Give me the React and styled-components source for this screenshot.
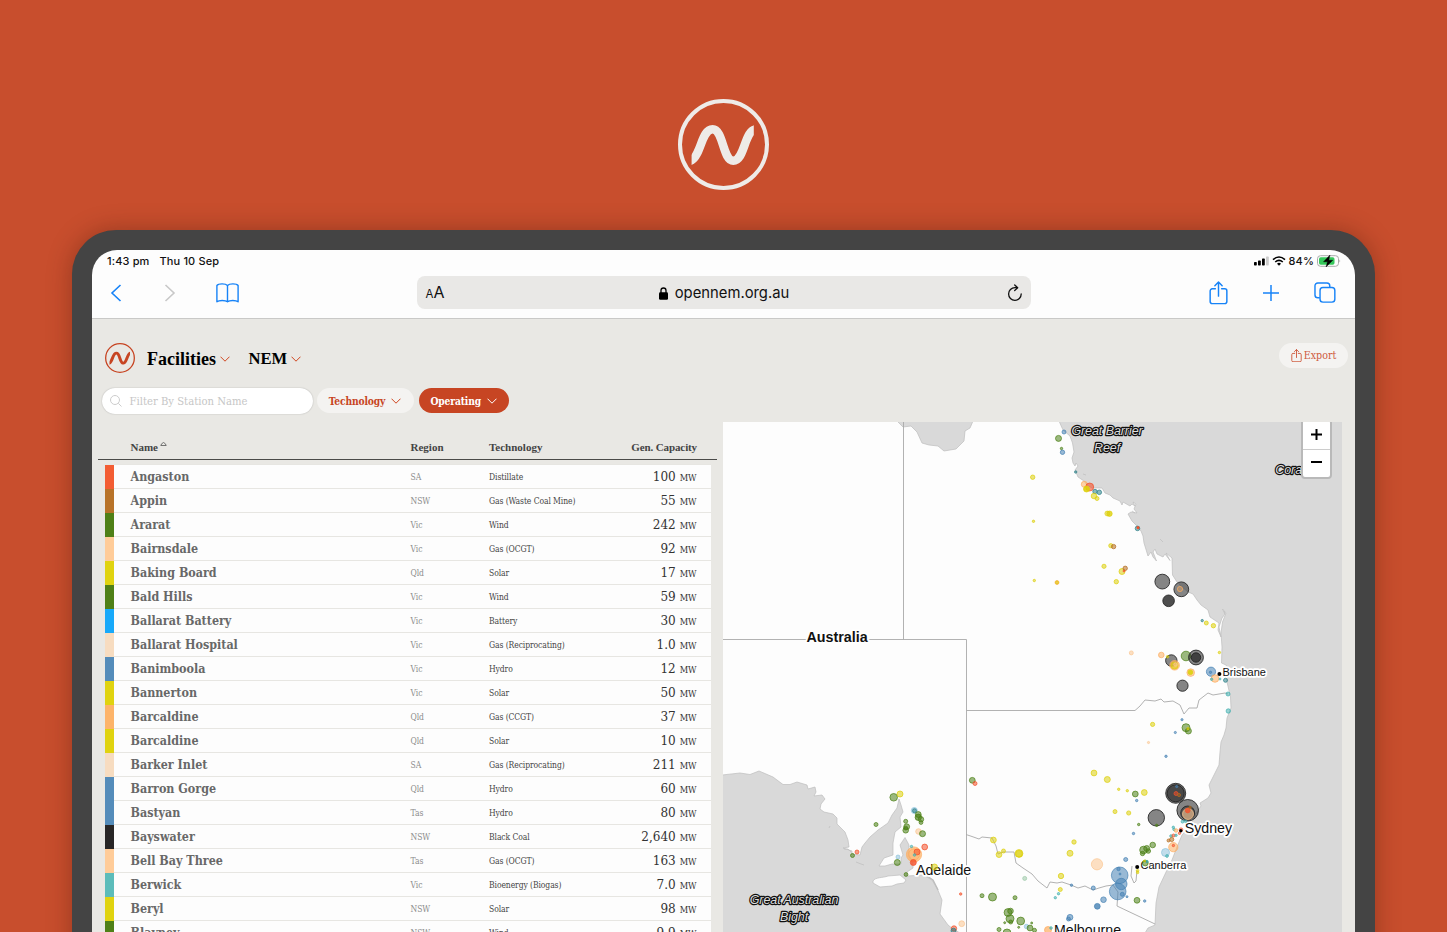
import React from "react";
import styled, { createGlobalStyle } from "styled-components";

const Global = createGlobalStyle`
  * { box-sizing: border-box; }
  body { margin: 0; background: #c84e2d; overflow: hidden; }
  svg { display: block; flex: none; }
`;

const slab = `"DejaVu Serif Condensed", "DejaVu Serif", serif`;
const display = `"Liberation Serif", serif`;
const system = `Inter, "Liberation Sans", sans-serif`;

const Page = styled.div`
  width: 1447px;
  height: 932px;
  overflow: hidden;
  background: #c84e2d;
  display: flex;
  flex-direction: column;
  align-items: center;
  padding-top: 99px;
`;

const Device = styled.div`
  width: 1303px;
  height: 760px;
  flex: none;
  margin-top: 40px;
  padding: 20px 20px 0;
  border-radius: 44px 44px 0 0;
  background: #444;
  box-shadow: 0 0 24px rgba(60, 20, 10, 0.35);
`;

const Screen = styled.div`
  height: 740px;
  border-radius: 25px 25px 0 0;
  overflow: hidden;
  background: #fdfdfd;
  display: flex;
  flex-direction: column;
`;

const StatusBar = styled.div`
  height: 22px;
  display: flex;
  justify-content: space-between;
  align-items: center;
  padding: 0 14px 0 15px;
  font: 500 11px/22px ${system};
  color: #111;
  letter-spacing: 0.14px;
`;

const StatusGroup = styled.div`
  display: flex;
  align-items: center;
  gap: ${(p) => p.$gap}px;
`;

const Toolbar = styled.div`
  height: 47px;
  display: grid;
  grid-template-columns: 1fr 614px 1fr;
  border-bottom: 1px solid #c9c9c7;
`;

const ToolGroup = styled.div`
  height: 41px;
  display: flex;
  align-items: center;
  justify-content: ${(p) => (p.$end ? "flex-end" : "flex-start")};
  gap: ${(p) => p.$gap}px;
  padding: ${(p) => (p.$end ? "0 19.5px 0 0" : "0 0 0 17px")};
`;

const AddressBar = styled.div`
  height: 33px;
  margin-top: 4px;
  padding: 0 8px 2px 9px;
  border-radius: 8px;
  background: #e9e8e6;
  display: grid;
  grid-template-columns: 60px 1fr 60px;
  align-items: center;
  color: #111;
`;

const TextSize = styled.span`
  font: 400 16px/31px ${system};
  padding-top: 1px;
  small { font-size: 11.5px; }
`;

const Address = styled.span`
  display: flex;
  align-items: center;
  justify-content: center;
  gap: 7px;
  font: 400 14.8px/31px ${system};
`;

const Reload = styled.span`
  display: flex;
  justify-content: flex-end;
`;

const SitePage = styled.div`
  flex: 1;
  background: #e9e8e4;
  display: flex;
  flex-direction: column;
`;

const Header = styled.header`
  height: 69px;
  display: flex;
  align-items: flex-start;
  padding: 24px 7px 0 12.5px;
`;

const MenuTitle = styled.div`
  display: flex;
  align-items: center;
  gap: 4px;
  margin-left: ${(p) => p.$left}px;
  height: 32px;
  font: bold ${(p) => p.$size}px/32px ${display};
  color: #000;
`;

const ExportButton = styled.div`
  margin-left: auto;
  width: 69px;
  height: 25px;
  border-radius: 13px;
  background: #f4f3f1;
  color: #cf5a3d;
  display: flex;
  align-items: center;
  justify-content: center;
  gap: 2px;
  font: 400 10.6px/25px ${slab};
`;

const Filters = styled.div`
  height: 34px;
  display: flex;
  align-items: flex-start;
  padding-left: 10px;
`;

const SearchField = styled.div`
  width: 211px;
  height: 26px;
  border-radius: 13px;
  background: #fff;
  box-shadow: 0 0 1.5px rgba(0, 0, 0, 0.28);
  display: flex;
  align-items: center;
  gap: 7.5px;
  padding-left: 8px;
  font: 400 11.2px/27px ${slab};
  color: #c6c6c6;
`;

const Pill = styled.div`
  width: ${(p) => p.$width}px;
  height: 25px;
  margin-left: ${(p) => p.$left}px;
  border-radius: 13px;
  background: ${(p) => (p.$active ? "#c74523" : "#f4f3f1")};
  color: ${(p) => (p.$active ? "#fff" : "#c74523")};
  display: flex;
  align-items: center;
  justify-content: center;
  gap: 6px;
  font: bold 10.2px/26px ${slab};
  letter-spacing: -0.15px;
`;

const Content = styled.main`
  display: flex;
  gap: 6px;
  padding-left: 6px;
`;

const Table = styled.section`
  width: 619px;
`;

const TableHead = styled.div`
  height: 38px;
  border-bottom: 1px solid #4a4a48;
  display: grid;
  grid-template-columns: 280px 78.5px 1fr 100px;
  padding: 14px 20px 0 32.5px;
  font: bold 11px/22px ${display};
  color: #444;
`;

const HeadCell = styled.span`
  display: flex;
  gap: 2px;
  justify-content: ${(p) => (p.$right ? "flex-end" : "flex-start")};
  letter-spacing: ${(p) => (p.$right ? "-0.12px" : "0")};
`;

const Rows = styled.div`
  width: 606px;
  margin: 4px 0 0 6.5px;
`;

const Row = styled.div`
  height: 24px;
  background: #fdfdfd;
  border-top: 1px solid #e7e6e2;
  display: grid;
  grid-template-columns: 9.5px 16.5px 280px 78.5px 1fr 100px 14px;
  align-items: stretch;
`;

const Swatch = styled.span`
  background: ${(p) => p.$color};
`;

const Name = styled.span`
  grid-column: 3;
  font: bold 12.4px/24.4px ${slab};
  color: #686868;
`;

const Region = styled.span`
  font: 400 8.5px/24px ${slab};
  letter-spacing: -0.05px;
  color: #8c8c8c;
`;

const Tech = styled.span`
  font: 400 8.5px/24px ${slab};
  letter-spacing: -0.09px;
  color: #444;
  white-space: nowrap;
`;

const Capacity = styled.span`
  font: 400 13.4px/24.4px ${slab};
  color: #333;
  text-align: right;
  small { margin-left: 4px; font-size: 9.2px; letter-spacing: -0.1px; }
`;

const MapPanel = styled.section`
  position: relative;
  width: 619px;
  height: 510px;
  overflow: hidden;
`;

const ZoomControl = styled.div`
  position: absolute;
  top: -3px;
  right: 10px;
  width: 31px;
  height: 60px;
  background: #fff;
  border: 2px solid #b9b9b9;
  border-radius: 4px;
  display: flex;
  flex-direction: column;
`;

const ZoomButton = styled.div`
  flex: 1;
  display: flex;
  align-items: center;
  justify-content: center;
  & + & { border-top: 1px solid #ccc; }
`;

const Mark = ({ size, color, ring, wave }) => (
  <svg width={size} height={size} viewBox="0 0 91 91" fill="none" stroke={color}>
    <circle cx="45.5" cy="45.5" r={45.5 - ring / 2} strokeWidth={ring} />
    <path
      d="M9 63.3L13.5 61.3C23 56 23.5 30.300 34.6 30.300C45.5 30.300 44.7 61.700 55.300 61.700C66 61.700 66 36 75.500 31L80 29"
      strokeWidth={wave}
      clipPath="url(#markClip)"
    />
    <clipPath id="markClip"><rect x="13.600" y="26" width="62.200" height="40" /></clipPath>
  </svg>
);

const Chevron = ({ w = 10, h = 6, color = "#d0461f", sw = 1 }) => (
  <svg width={w} height={h} viewBox="0 0 10 6" fill="none" stroke={color} strokeWidth={sw}>
    <path d="M.5.7 5 5.200 9.500.7" />
  </svg>
);

const ShareGlyph = ({ w, h, color, sw }) => (
  <svg width={w} height={h} viewBox="0 0 18 23" fill="none" stroke={color} strokeWidth={sw} strokeLinecap="round" strokeLinejoin="round">
    <path d="M6 7.500H3a2 2 0 0 0-2 2v10.200a2 2 0 0 0 2 2h12a2 2 0 0 0 2-2V9.500a2 2 0 0 0-2-2h-3M9 14.500V1M5.500 4.500 9 1l3.500 3.500" />
  </svg>
);

const blue = "#1783f7";

const C = {
  distillate: "#f35d33", wcm: "#b87329", wind: "#4f8017", ocgt: "#ffcc99",
  solar: "#e0d310", battery: "#18a9fa", recip: "#f7dcc0", hydro: "#548cba",
  ccgt: "#fdb46a", black: "#282626", bio: "#5cbcba",
};

const stations = [
  ["Angaston", "SA", "Distillate", "100", C.distillate],
  ["Appin", "NSW", "Gas (Waste Coal Mine)", "55", C.wcm],
  ["Ararat", "Vic", "Wind", "242", C.wind],
  ["Bairnsdale", "Vic", "Gas (OCGT)", "92", C.ocgt],
  ["Baking Board", "Qld", "Solar", "17", C.solar],
  ["Bald Hills", "Vic", "Wind", "59", C.wind],
  ["Ballarat Battery", "Vic", "Battery", "30", C.battery],
  ["Ballarat Hospital", "Vic", "Gas (Reciprocating)", "1.0", C.recip],
  ["Banimboola", "Vic", "Hydro", "12", C.hydro],
  ["Bannerton", "Vic", "Solar", "50", C.solar],
  ["Barcaldine", "Qld", "Gas (CCGT)", "37", C.ccgt],
  ["Barcaldine", "Qld", "Solar", "10", C.solar],
  ["Barker Inlet", "SA", "Gas (Reciprocating)", "211", C.recip],
  ["Barron Gorge", "Qld", "Hydro", "60", C.hydro],
  ["Bastyan", "Tas", "Hydro", "80", C.hydro],
  ["Bayswater", "NSW", "Black Coal", "2,640", C.black],
  ["Bell Bay Three", "Tas", "Gas (OCGT)", "163", C.ocgt],
  ["Berwick", "Vic", "Bioenergy (Biogas)", "7.0", C.bio],
  ["Beryl", "NSW", "Solar", "98", C.solar],
  ["Blayney", "NSW", "Wind", "9.9", C.wind],
];

const K = { k: "#222", y: "#ddd00c", g: "#4b8016", b: "#4682b4", r: "#f4502a", o: "#fdae61", p: "#fbc692", t: "#45b0b0", d: "#2b8088", n: "#b46c20", l: "#8fc3dd", c: "#9cc9a8" };

// Facilities on the map: x, y, radius, colour key, optional fill opacity
const dots = [
  [1064, 432, 2, "b"], [1058.500, 438.400, 3, "g"], [1061.500, 448.500, 1.200, "g"], [1062.500, 452.300, 2.200, "b"],
  [1075.700, 472, 1.200, "d"], [1032.700, 477.200, 2.200, "y"], [1084.300, 484.300, 3, "o"], [1089.700, 487, 4, "r", 0.6], [1086.500, 489, 3, "y", 0.9],
  [1095, 491.500, 2.200, "d"], [1099.300, 492.300, 2.300, "d"], [1094, 496, 2.800, "y"], [1097, 498.500, 2, "y"],
  [1107.300, 513.500, 2.400, "y"], [1109.500, 513.700, 2.700, "y", 0.8], [1033.500, 521.300, 1.200, "y"], [1137.500, 528.400, 2.300, "d"], [1138, 527.700, 1.200, "r", 1],
  [1110.800, 545.700, 2.100, "y"], [1113.600, 546.600, 2.200, "n"], [1104, 566.300, 2.100, "y"], [1122, 571.500, 3, "y"], [1125.200, 568.300, 2.200, "n"], [1124, 571, 1, "r"],
  [1116.300, 581.700, 2.200, "y"], [1034.300, 580.500, 1.200, "y"], [1057, 582.500, 2, "o", 0.8], [1057, 582.500, 1.500, "y", 0.4],
  [1162.300, 581.600, 7.400, "k"], [1181.300, 589.300, 7.400, "k"], [1180, 589, 2.600, "o", 0.3], [1168.600, 600.800, 5.800, "k", 0.8],
  [1202.200, 620.600, 1.200, "d"], [1206.300, 623, 2, "y"], [1213.400, 625.700, 2.200, "y"], [1219.400, 652.500, 1.200, "y"],
  [1131.300, 652.900, 2, "p"], [1161.300, 655, 2.800, "o"], [1171.300, 660.500, 5.700, "k"], [1174.600, 665.300, 4.800, "o", 0.7], [1174.500, 665.500, 3.500, "y"], [1175.500, 664.500, 1.800, "p"], [1167.500, 656.700, 1.200, "y"],
  [1186, 656, 4.800, "g"], [1196, 657.500, 7.400, "k"], [1196, 657.500, 4.700, "k", 0.7], [1190.700, 672.600, 3.800, "o"], [1190.400, 672.300, 2.400, "y", 0.9],
  [1182.500, 685.700, 5.600, "k"], [1211, 671.700, 4.600, "b"], [1210.500, 672.300, 1.200, "b"], [1215, 678.500, 3.800, "o"], [1211.600, 679.300, 1.200, "t"], [1220, 679, 1, "t"],
  [1225.500, 680.300, 2, "d"], [1228, 694, 2, "t"], [1228.300, 711, 2.200, "t"],
  [1152.600, 724.400, 2.100, "y"], [1182, 719.700, 1.100, "b"], [1186, 727.700, 4, "g"], [1188.400, 731, 3, "g"], [1188, 728.700, 1.200, "y"], [1175.300, 732.500, 1.100, "b"], [1148.500, 742.500, 1.100, "p"], [1166, 756.300, 1.200, "b"],
  [1094, 773, 2.900, "y"], [1107.300, 779.500, 3, "y"], [1118.700, 789.300, 1.200, "y"], [1127.300, 790.700, 1.200, "y"], [1135.300, 794, 2.900, "g"], [1144.300, 792.500, 2.900, "y"], [1136.700, 800.500, 1.200, "b"],
  [1115, 811.600, 2, "y"], [1128.700, 813, 2.100, "y"], [1138.700, 824.500, 1.200, "g"], [1133.500, 833.500, 1.200, "b"],
  [1175.700, 793.300, 10, "k", 0.65], [1175.700, 793.300, 8.500, "k", 0.5], [1176, 793.500, 2, "r"], [1179, 795, 1.600, "n"], [1176.700, 786.600, 1.100, "b"],
  [1187.700, 810.300, 10.800, "k"], [1187.700, 813, 7, "k", 0.5], [1188, 814, 5.500, "p", 0.6], [1187.700, 810.500, 2.400, "r", 0.8], [1190, 807.500, 1.300, "n"],
  [1156.300, 817.800, 8.200, "k"], [1156.700, 825.300, 1.200, "g"],
  [1182.500, 821.700, 1.400, "t"], [1185.500, 821.300, 1.300, "t"], [1173.300, 827.300, 1.200, "t"], [1174, 829.500, 1.200, "t"], [1176, 830.500, 1.800, "o"], [1181, 829.700, 1.800, "r"], [1179.500, 833.300, 1.200, "r"],
  [1171, 836, 1.300, "t"], [1173.500, 835.500, 1.500, "r"], [1176, 835.300, 1.200, "t"], [1171.700, 839.500, 2.100, "n"], [1168.500, 840.500, 1.500, "n"], [1173.300, 847.200, 4.600, "o"], [1173.400, 845.500, 1.200, "r"], [1165.500, 852.500, 4, "l"], [1167, 856, 1.400, "t"],
  [1152.700, 845, 2.800, "g"], [1146.700, 848.500, 3, "g"], [1143.500, 850, 3.800, "g"], [1148.300, 851, 2.300, "g"], [1142.500, 853.500, 2.200, "g"],
  [1074, 842, 2.200, "y"], [1070, 853.300, 3, "y"], [1019, 853.700, 3.300, "y"], [1125.700, 859.500, 2, "b"], [1097, 864.300, 5.600, "p"], [1061, 876, 2.700, "y"], [1060.300, 889.500, 2, "y"], [1058.500, 893.700, 1.200, "t"], [1055.300, 897.700, 1.200, "t"],
  [1071.500, 885.200, 1.200, "b"], [1093.300, 888, 2, "b"], [1119.700, 875.300, 8.300, "b"], [1121.300, 884, 5.700, "b"], [1117.700, 891.500, 8.300, "b"], [1118.500, 869, 1.700, "b"], [1120, 874, 1, "b"], [1122.300, 894.300, 2, "b"], [1127, 896.700, 1, "b"],
  [1103.500, 899.700, 2.800, "b"], [1097.300, 906.300, 2.900, "b", 0.8], [1137, 900.300, 2.900, "g"], [1144.700, 901, 1.200, "b"], [1070, 917.300, 2.900, "b"], [1068.500, 919, 2, "b"],
  [1137.600, 870.700, 1.300, "y"], [1137.600, 872.500, 1.200, "y"], [1145.300, 863, 2.900, "g"], [1147, 861.500, 1.200, "t"], [1144.500, 861, 1, "y"],
  [1024.700, 878.400, 2, "c"],
  [972.300, 780.300, 2.900, "g"], [975, 783.500, 2, "r"], [893.700, 797.300, 3.800, "g"], [900, 794, 3, "y"], [876, 824.500, 2, "g"], [857, 852, 2, "r"], [852.500, 855.500, 2, "g"],
  [914.300, 810.500, 3, "l"], [914.500, 810.700, 2, "d"], [918.300, 814.500, 2.900, "g"], [918.300, 817.300, 3.200, "g", 0.7], [921, 819.300, 2.700, "g"], [921, 822.500, 1.900, "g"],
  [905.700, 821.300, 2, "g"], [906.700, 826.700, 2.900, "g"], [905.700, 830.300, 2.800, "g"], [905.700, 828, 2, "g"], [918.500, 831.500, 2.800, "p"], [922.500, 833.700, 3, "g"], [924.700, 847, 2.900, "r"],
  [914, 854.500, 7.600, "o", 0.7], [914, 854.500, 5.500, "o", 0.3], [917, 852, 3, "r"], [914.500, 855, 1.300, "t"], [913.300, 862.500, 3, "r", 0.8], [911.500, 846.500, 1.200, "t"], [898, 857, 2, "l"], [897.300, 862.500, 3, "g"], [906, 874.500, 1.900, "g"],
  [934.500, 867, 3, "y"], [960.700, 894, 1.200, "r"], [961.700, 923.700, 2.900, "p"], [954, 928.500, 2.700, "r"], [953.500, 930.700, 2.500, "d"],
  [993.400, 840, 2.900, "y"], [999, 854.600, 2.900, "y"], [1003.500, 851, 2, "y"], [1019, 853.500, 3.900, "y"],
  [982, 895.700, 2, "g"], [992.500, 897, 4, "g"], [1015, 897.700, 2, "g"], [1008, 912.500, 3.900, "g"], [1010.500, 911, 2.800, "g"], [1010, 918.700, 4, "g"], [1010.700, 922, 2, "g"], [1004.700, 922.700, 1, "g"], [1020.700, 921, 3.900, "g"], [1031.700, 923, 1, "g"], [1018.700, 927.300, 1, "g"],
  [1007, 933, 4, "g"], [999, 929.500, 2, "g"], [1026.500, 926.500, 2.200, "l"], [1030, 928, 2.900, "g"], [1034.500, 930.300, 2, "g"],
  [1048, 930, 3.500, "o", 0.7], [1051, 928, 1.300, "t"],
];

const Dot = ([x, y, r, k, f = 0.55], i) => (
  <circle key={i} cx={x} cy={y} r={r} fill={K[k]} fillOpacity={f} stroke={K[k]} strokeOpacity={k === "k" ? 0.85 : 0.7} strokeWidth="1" />
);

const Ocean = styled.text`
  font: italic 12.5px "Liberation Sans", sans-serif;
  letter-spacing: -0.08px;
  fill: #dedede;
  stroke: #111;
  stroke-width: 2.4px;
  stroke-linejoin: round;
  paint-order: stroke;
  text-anchor: middle;
`;

const City = styled.text`
  font: ${(p) => p.$weight || 400} ${(p) => p.$size}px "Liberation Sans", sans-serif;
  fill: #111;
  stroke: #fff;
  stroke-width: 3.5px;
  stroke-linejoin: round;
  paint-order: stroke;
`;

const FacilityMap = () => (
  <svg width="619" height="510" viewBox="723 422 619 510">
    <rect x="723" y="422" width="620" height="510" fill="#fdfdfd" />
    <g fill="#d9d9d9" stroke="#bdbdbd" strokeWidth=".7" strokeLinejoin="round">
      <path d="M1059 421L1063 430 1070 436 1072.500 443 1074 452 1072 458 1073 463 1075 466 1076 463 1078 466 1075 470 1078 477 1084 481 1087 485 1092 488 1102 488 1105 493 1110 495 1113 498 1120 501 1122 505 1123 502 1130 506 1132 504 1135 506 1133 502 1136 504 1134 509 1137 513 1131 512 1128 514 1132 521 1137 526 1141 531 1143 536 1144 543 1148 556 1151 552 1153 557 1156.500 561 1153 552 1155 549 1157 554 1163 557 1165 554 1170 560.500 1166 553 1172 558 1172.500 575 1177 582 1181 586 1188 592 1193 594 1197 600 1201 605 1208 610 1210 617 1216 621 1219 623 1218 630 1221 637 1219 627 1222 618 1225 614 1222.500 609 1226 613 1222.500 622 1221 633 1222 647 1221.500 663 1226 665 1228 668 1227 682 1230.500 697 1231 708 1227 718 1226 728 1224 735 1221 742 1220 752 1219 765 1215 773 1209 785 1211 793 1208 798 1200 803 1201 806 1196 813 1191 825 1182 835 1177 847 1172 860 1167 870 1159 887 1156 903 1155 925 1148 928 1145 933H1343V421Z" />
      <path d="M897 421L903 427 911 426 917 432 922 443 929 445 938 446 944 451 956 449 964 441 965 431 970 428 973 421Z" />
      <path d="M722 775L740 773 750 774.500 759 771 773 777 783 784.500 790 784.500 797 782 807 785 808 789 815 787 816 792 814 796 822 795 825 799 821 804 820 809 824 812 833 814 837 818 837 824 845 832 848 840 849 847 843 848 852 851 852 854 860 855 862 847 865 843 870 837 878 830 888 823 892 815 897 808 899 799 901 805 903 812 900 817 901 827 895 832 893 843 893 855 884 858 879 866 885 866 892 864 901 864 901 858 903 855 900 845 905 837.500 909 845 909 855 913 863 913 868 907 872 907 876 923 875 932 880 937 888 942 900 940 914 948 925 953 929 960 933H722Z" />
      <path d="M873 881C875 877 883 878 888 876L900 875 906 880 904 883 897 884 892 886 880 887 873 883Z" fill="#fdfdfd" />
      <path d="M844 849l4 0 3 3M829 828l1-2M856 862l5 2 3 1M1083 474l3 1M1160 539l3 3M1132 511l3 2M1224 611l1 3" fill="none" />
      <path d="M927 876L933 880 938 890" fill="none" strokeWidth="1.500" />
    </g>
    <g fill="none" stroke="#a9a9a9" strokeWidth=".9">
      <path d="M903.500 422V639.500M723 639.500H966.500V932M966.500 710.500H1135" />
      <path d="M1135 710.500L1140 706 1145 700 1155 701 1161 699 1164 702 1173 701 1180 705 1184 714 1189 708 1197 708 1199 700 1208 693 1213 695 1225 693 1228 694" />
      <path d="M966 834.500L972 836.500 979 839 982 837 992 838 996 846 998 854 1003 852 1014 852 1016 863 1023 868 1032 874 1038 881 1047 888 1050 882 1057 883 1062 882 1071 885 1078 888 1085 886 1093 890 1099 888 1106 886 1113 885 1118 892 1117 906 1155 924" />
      <path d="M1132 866L1131 876 1134 883 1136 881 1137 870" />
    </g>
    <g>
      <Ocean x="1107" y="435">Great Barrier</Ocean>
      <Ocean x="1107" y="452">Reef</Ocean>
      <Ocean x="1290" y="474">Coral</Ocean>
      <Ocean x="794" y="904">Great Australian</Ocean>
      <Ocean x="794" y="921">Bight</Ocean>
      <City x="806.5" y="642" $size={14.3} $weight="bold">Australia</City>
    </g>
    <g>
      <City x="916" y="875" $size={14.2}>Adelaide</City>
      <City x="1184.700" y="833" $size={14.2}>Sydney</City>
      <City x="1140.500" y="869" $size={11}>Canberra</City>
      <City x="1222.500" y="676" $size={11}>Brisbane</City>
    </g>
    {dots.map(Dot)}
    <City x="1054" y="935" $size={14.2}>Melbourne</City>
    <g fill="#000">
      <circle cx="1219.400" cy="674" r="2" />
      <circle cx="1180.800" cy="830.700" r="1.700" />
      <circle cx="1137.200" cy="867" r="2" />
    </g>
  </svg>
);

export default function App() {
  return (
    <Page>
      <Global />
      <Mark size={91} color="#eeebe8" ring={4} wave={8.5} />
      <Device>
        <Screen>
          <StatusBar>
            <StatusGroup $gap={10}><span>1:43 pm</span><span>Thu 10 Sep</span></StatusGroup>
            <StatusGroup $gap={3}>
              <svg width="15" height="10" viewBox="0 0 15 10">
                <rect y="6" width="2.800" height="3.500" rx=".7" /><rect x="4" y="4.500" width="2.800" height="5" rx=".7" />
                <rect x="8" y="2.500" width="2.800" height="7" rx=".7" /><rect x="12" y=".5" width="2.800" height="9" rx=".7" fill="#ccc" />
              </svg>
              <svg width="14" height="10" viewBox="0 0 14 10" fill="none" stroke="#000" strokeWidth="1.600">
                <path d="M1 3.600Q7-1.600 13 3.600M3.200 6Q7 2.700 10.800 6" /><path d="M5 7.700Q7 6 9 7.700L7 9.700Z" fill="#000" stroke="none" />
              </svg>
              <span>84%</span>
              <svg width="24" height="12" viewBox="0 0 24 12">
                <rect x=".5" y=".7" width="21" height="10.600" rx="3" fill="none" stroke="#aaa" />
                <rect x="2" y="2.200" width="15.500" height="7.600" rx="1.800" fill="#34c759" />
                <path d="M22.500 4.500q1.500 1.500 0 3z" fill="#999" />
                <path d="M13 0L6.500 6.800H10.500L9 12 15.800 5.200H11.800Z" fill="#000" stroke="#000" strokeWidth=".4" />
              </svg>
            </StatusGroup>
          </StatusBar>
          <Toolbar>
            <ToolGroup $gap={39.5}>
              <svg width="14" height="20" viewBox="0 0 14 20" fill="none" stroke={blue} strokeWidth="1.600"><path d="M11.500 2 3 10l8.500 8" /></svg>
              <svg width="14" height="20" viewBox="0 0 14 20" fill="none" stroke="#c8c8c8" strokeWidth="1.600"><path d="M2.500 2 11 10l-8.500 8" /></svg>
              <svg width="23" height="20" viewBox="0 0 23 20" fill="none" stroke={blue} strokeWidth="1.400" strokeLinejoin="round">
                <path d="M11.500 2.500C9.500.3 2.500.4.900 2.500V18.800C3 17 9.500 17 11.500 18.800 13.500 17 20 17 22.100 18.800V2.500C20.500.4 13.500.3 11.500 2.500ZV18.800" />
              </svg>
            </ToolGroup>
            <AddressBar>
              <TextSize><small>A</small>A</TextSize>
              <Address>
                <svg width="9" height="13" viewBox="0 0 9 13"><rect y="5.300" width="9" height="7.500" rx="1.300" /><path d="M2 6V3.500a2.500 2.500 0 0 1 5 0V6" fill="none" stroke="#000" strokeWidth="1.300" /></svg>
                opennem.org.au
              </Address>
              <Reload>
                <svg width="16" height="18" viewBox="0 0 16 18" fill="none" stroke="#111" strokeWidth="1.300" strokeLinecap="round" strokeLinejoin="round">
                  <path d="M14.200 10A6.300 6.300 0 1 1 7.900 3.700H10.500M7.700 1 10.700 3.700 7.700 6.500" />
                </svg>
              </Reload>
            </AddressBar>
            <ToolGroup $end $gap={34}>
              <ShareGlyph w={19} h={24} color={blue} sw={1.4} />
              <svg width="18" height="18" viewBox="0 0 18 18" stroke={blue} strokeWidth="1.500"><path d="M1 9H17M9 1V17" /></svg>
              <svg width="22" height="21" viewBox="0 0 23 22" fill="none" stroke={blue} strokeWidth="1.500">
                <path d="M6 16.500H4a3 3 0 0 1-3-3V4a3 3 0 0 1 3-3H13.500a3 3 0 0 1 3 3V5.500" /><rect x="6.300" y="5.800" width="15.500" height="15.300" rx="3" />
              </svg>
            </ToolGroup>
          </Toolbar>
          <SitePage>
            <Header>
              <Mark size={30} color="#c74523" ring={4} wave={9} />
              <MenuTitle $left={12.5} $size={18}>Facilities <Chevron /></MenuTitle>
              <MenuTitle $left={18.5} $size={16.6}>NEM <Chevron /></MenuTitle>
              <ExportButton><ShareGlyph w={11} h={13.5} color="#cf5a3d" sw={1.6} />Export</ExportButton>
            </Header>
            <Filters>
              <SearchField>
                <svg width="12" height="12" viewBox="0 0 12 12" fill="none" stroke="#ccc"><circle cx="5" cy="5" r="4.500" /><path d="M8.300 8.300 11.500 11.500" /></svg>
                Filter By Station Name
              </SearchField>
              <Pill $width={97} $left={3.5}>Technology <Chevron /></Pill>
              <Pill $width={90.5} $left={5} $active>Operating <Chevron color="#fff" /></Pill>
            </Filters>
            <Content>
              <Table>
                <TableHead>
                  <HeadCell>Name <svg width="7" height="14" viewBox="0 0 7 14" fill="none" stroke="#555"><path d="M.8 9.500H6.200Q5.800 7.500 3.500 6.500 1.200 7.500.8 9.500Z" strokeWidth=".8" /></svg></HeadCell>
                  <HeadCell>Region</HeadCell>
                  <HeadCell>Technology</HeadCell>
                  <HeadCell $right>Gen. Capacity</HeadCell>
                </TableHead>
                <Rows>
                  {stations.map(([name, region, tech, mw, color], i) => (
                    <Row key={i}>
                      <Swatch $color={color} />
                      <Name>{name}</Name>
                      <Region>{region}</Region>
                      <Tech>{tech}</Tech>
                      <Capacity>{mw}<small>MW</small></Capacity>
                    </Row>
                  ))}
                </Rows>
              </Table>
              <MapPanel>
                <FacilityMap />
                <ZoomControl>
                  <ZoomButton><svg width="11" height="11" stroke="#000" strokeWidth="2"><path d="M0 5.500H11M5.500 0V11" /></svg></ZoomButton>
                  <ZoomButton><svg width="11" height="11" stroke="#000" strokeWidth="2"><path d="M0 4H11" /></svg></ZoomButton>
                </ZoomControl>
              </MapPanel>
            </Content>
          </SitePage>
        </Screen>
      </Device>
    </Page>
  );
}
